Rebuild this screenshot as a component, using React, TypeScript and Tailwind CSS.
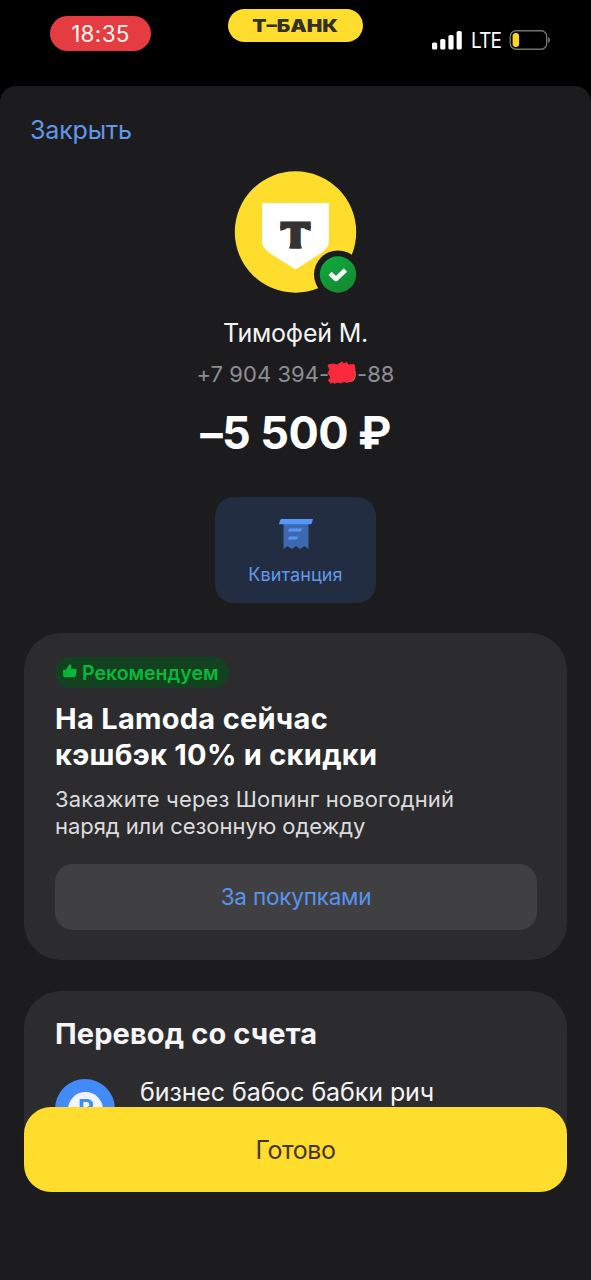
import type { ReactNode } from "react";

function StatusBar() {
  return (
    <header className="flex h-[86px] items-start bg-black pl-[50px] pr-10">
      <div className="mt-4 flex h-[35px] w-[101px] items-center justify-center rounded-full bg-[#e53c42]">
        <span className="pt-px text-[22.5px] leading-none tracking-[0.3px] text-[#fff3f0]">18:35</span>
      </div>
      <div className="ml-[77px] mt-[9px] flex h-[33px] w-[135px] items-center justify-center rounded-full bg-[#ffdd2d]">
        <span className="origin-center scale-x-[1.22] whitespace-nowrap pt-0.5 text-[17px] font-black leading-none text-[#333026]">Т–БАНК</span>
      </div>
      <div className="ml-auto mt-[29.5px] flex h-5 items-center">
        <SignalIcon />
        <span className="ml-[9px] w-[30px] origin-left scale-x-[0.91] pt-0.5 text-[21px] leading-[22px] tracking-[-1px] text-white">LTE</span>
        <BatteryIcon />
      </div>
    </header>
  );
}

function SignalIcon() {
  return (
    <svg width="30" height="20" viewBox="0 0 30 20" fill="#fff">
      <rect x="0" y="12.5" width="5.2" height="7" rx="1.6" />
      <rect x="8.2" y="9" width="5.2" height="10.5" rx="1.6" />
      <rect x="16.4" y="5" width="5.2" height="14.5" rx="1.6" />
      <rect x="24.6" y="1" width="5.2" height="18.5" rx="1.6" />
    </svg>
  );
}

function BatteryIcon() {
  return (
    <svg className="ml-2 shrink-0" width="42" height="20" viewBox="0 0 42 20" fill="none">
      <rect x="1.3" y="0.8" width="36.4" height="18.4" rx="5.6" stroke="#737373" strokeWidth="1.4" />
      <rect x="3.6" y="3" width="6.5" height="14" rx="3.2" fill="#ffd426" />
      <path d="M39.2 7v6c1.2-.6 1.8-1.7 1.8-3s-.6-2.4-1.8-3Z" fill="#737373" />
    </svg>
  );
}

function Avatar() {
  return (
    <svg width="124" height="124" viewBox="0 0 124 124">
      <defs>
        <linearGradient id="ok" x1="0" y1="0" x2="0.6" y2="1">
          <stop offset="0" stopColor="#0dae3c" />
          <stop offset="1" stopColor="#158a32" />
        </linearGradient>
      </defs>
      <circle cx="61.5" cy="62" r="60.7" fill="#ffdd2d" />
      <path d="M28 33h67v38c0 5-3.5 9-8.500 12.500L61.5 99.500 36.500 83.500C31.500 80 28 76 28 71Z" fill="#fff" />
      <text
        x="61.5"
        y="78"
        textAnchor="middle"
        textLength="32"
        lengthAdjust="spacingAndGlyphs"
        fill="#333"
        stroke="#333"
        strokeWidth="0.8"
        className="font-[Inter,sans-serif] text-[36px] font-black"
      >
        Т
      </text>
      {/* flared tips and foot of the emblem */}
      <path d="M46.300 56v5l6-2V56Z M76.700 56v5l-6-2V56Z M57 72l-2 6.400h13L66 72Z" fill="#333" />
      <circle cx="104" cy="104.5" r="24" fill="#1c1c1e" />
      <circle cx="104" cy="104.5" r="18.2" fill="url(#ok)" />
      <path d="m96 103.500 6 5.500 9.500-9" fill="none" stroke="#fff" strokeWidth="4.5" strokeLinejoin="round" />
    </svg>
  );
}

function ReceiptIcon() {
  return (
    <svg width="34" height="32" viewBox="0 0 34 32">
      <path d="M4.500 4h25v27l-4-3-4.300 3-4.200-3-4.200 3-4.300-3-4 3Z" fill="#3d69b0" />
      <path d="M3 1h31l-1.200 4c-.3.800-.8 1.300-1.800 1.300H0l1-3.800C1.300 1.500 2 1 3 1Z" fill="#5896f8" />
      <path d="M10 10.500h13l-1 3H9Z M10 18.500h9l-1 3H9Z" fill="#5896f8" />
    </svg>
  );
}

function ThumbIcon() {
  return (
    <svg className="mb-[3px]" width="14" height="14" viewBox="0 0 14 14" fill="#09b83a">
      <path d="M0 5.800h2.800v7.400H1.800C.8 13.200.2 12.500.2 11.500Z" />
      <path d="M2.600 6 6.200.7C7.600 0 8.600 1 8.300 2.500L8 4.700h4.200c1 0 1.700.9 1.500 1.900l-1 5.200c-.2.900-.8 1.400-1.700 1.400H2.600Z" />
    </svg>
  );
}

// red marker strokes that hide part of the number
function Scribble() {
  return (
    <svg className="absolute left-[131px] top-[1px]" width="31" height="24" viewBox="0 0 31 24">
      <path
        d="M1 4 6 3l4 1 5-3 1.500 2 3.500-1.500 1 2.500 6-.5 1 4-1 3.500 1.500 3-2 3-1.500 3.500-3 0-2 1-3-1-3.500 1.500-3-1-3.500 1.500-1.500-1.500L4 22.500 1.500 19.500 4 16 .8 12l2-3Z"
        fill="#fa2a3c"
        stroke="#fa2a3c"
        strokeLinejoin="round"
      />
    </svg>
  );
}

function Card({ className, children }: { className: string; children: ReactNode }) {
  return <section className={`mx-6 rounded-[37px] bg-[#2c2c2e] px-[31px] ${className}`}>{children}</section>;
}

export default function App() {
  return (
    <div className="relative h-[1280px] w-[591px] overflow-hidden bg-black font-[Inter,sans-serif]">
      <StatusBar />

      <main className="flex h-[1194px] flex-col rounded-t-[16px] bg-[#1c1c1e]">
        <button className="ml-[30px] mt-7 self-start text-[25px] leading-8 tracking-[-0.15px] text-[#6297ea]">Закрыть</button>

        {/* Recipient */}
        <div className="mt-[24px] flex flex-col items-center">
          <Avatar />
          <h1 className="mt-[23px] text-[25px] leading-8 tracking-[-0.2px] text-[#f4f4f5]">Тимофей М.</h1>
          <div className="relative mt-[11px] whitespace-nowrap text-[22px] leading-7 tracking-[0.05px] text-[#8d8e93]">
            +7 904 394-00-88
            <Scribble />
          </div>
          <p className="mt-[17px] whitespace-nowrap text-[45px] font-bold leading-[56px] tracking-[-0.6px] text-white">–5 500 ₽</p>
          <button className="mt-[36px] flex h-[106px] w-[161px] flex-col items-center rounded-[19px] bg-[#222d41] pt-[21px]">
            <ReceiptIcon />
            <span className="mt-[13px] text-[18px] leading-6 tracking-[0.1px] text-[#6297ea]">Квитанция</span>
          </button>
        </div>

        {/* Offer */}
        <Card className="mt-[30px] h-[327px] shrink-0 pt-6">
          <div className="flex h-[31px] w-[174px] items-center rounded-full bg-[#12421f] pl-2 text-[#09b83a]">
            <ThumbIcon />
            <span className="ml-[5px] whitespace-nowrap pt-0.5 text-[19.5px] font-semibold leading-none">Рекомендуем</span>
          </div>
          <h2 className="mt-[13px] whitespace-nowrap text-[29px] font-bold leading-9 tracking-[0.28px] text-white">
            На Lamoda сейчас
            <br />
            кэшбэк 10% и скидки
          </h2>
          <p className="mt-[13px] whitespace-nowrap text-[22px] leading-[27px] text-[#dcdcde]">
            <span className="tracking-[0.13px]">Закажите через Шопинг новогодний</span>
            <br />
            <span className="tracking-[-0.06px]">наряд или сезонную одежду</span>
          </p>
          <button className="mt-6 flex h-[66px] w-[482px] items-center justify-center rounded-[18px] bg-[#404042] text-[22.5px] tracking-[-0.2px] text-[#5a93ee]">
            За покупками
          </button>
        </Card>

        {/* Source account */}
        <Card className="mt-[31px] h-[170px] shrink-0 pt-[25px]">
          <h2 className="whitespace-nowrap text-[29px] font-bold leading-9 tracking-[0.12px] text-[#f6f6fa]">Перевод со счета</h2>
          <div className="mt-[27px] flex items-start">
            <div className="flex size-[60px] items-center justify-center rounded-full bg-[#428bf9]">
              <div className="flex size-[35px] items-center justify-center rounded-full bg-[#f0f5ff] text-[24px] font-bold leading-none text-[#428bf9]">₽</div>
            </div>
            <span className="-mt-[3px] ml-[25px] whitespace-nowrap text-[25px] leading-8 tracking-[-0.09px] text-[#f4f4f5]">бизнес бабос бабки рич</span>
          </div>
        </Card>
      </main>

      <button className="absolute inset-x-6 bottom-[88px] h-[85px] rounded-[27px] bg-[#ffdd2d] pt-0.5 text-[25px] tracking-[-0.5px] text-[#45351f]">Готово</button>
    </div>
  );
}
